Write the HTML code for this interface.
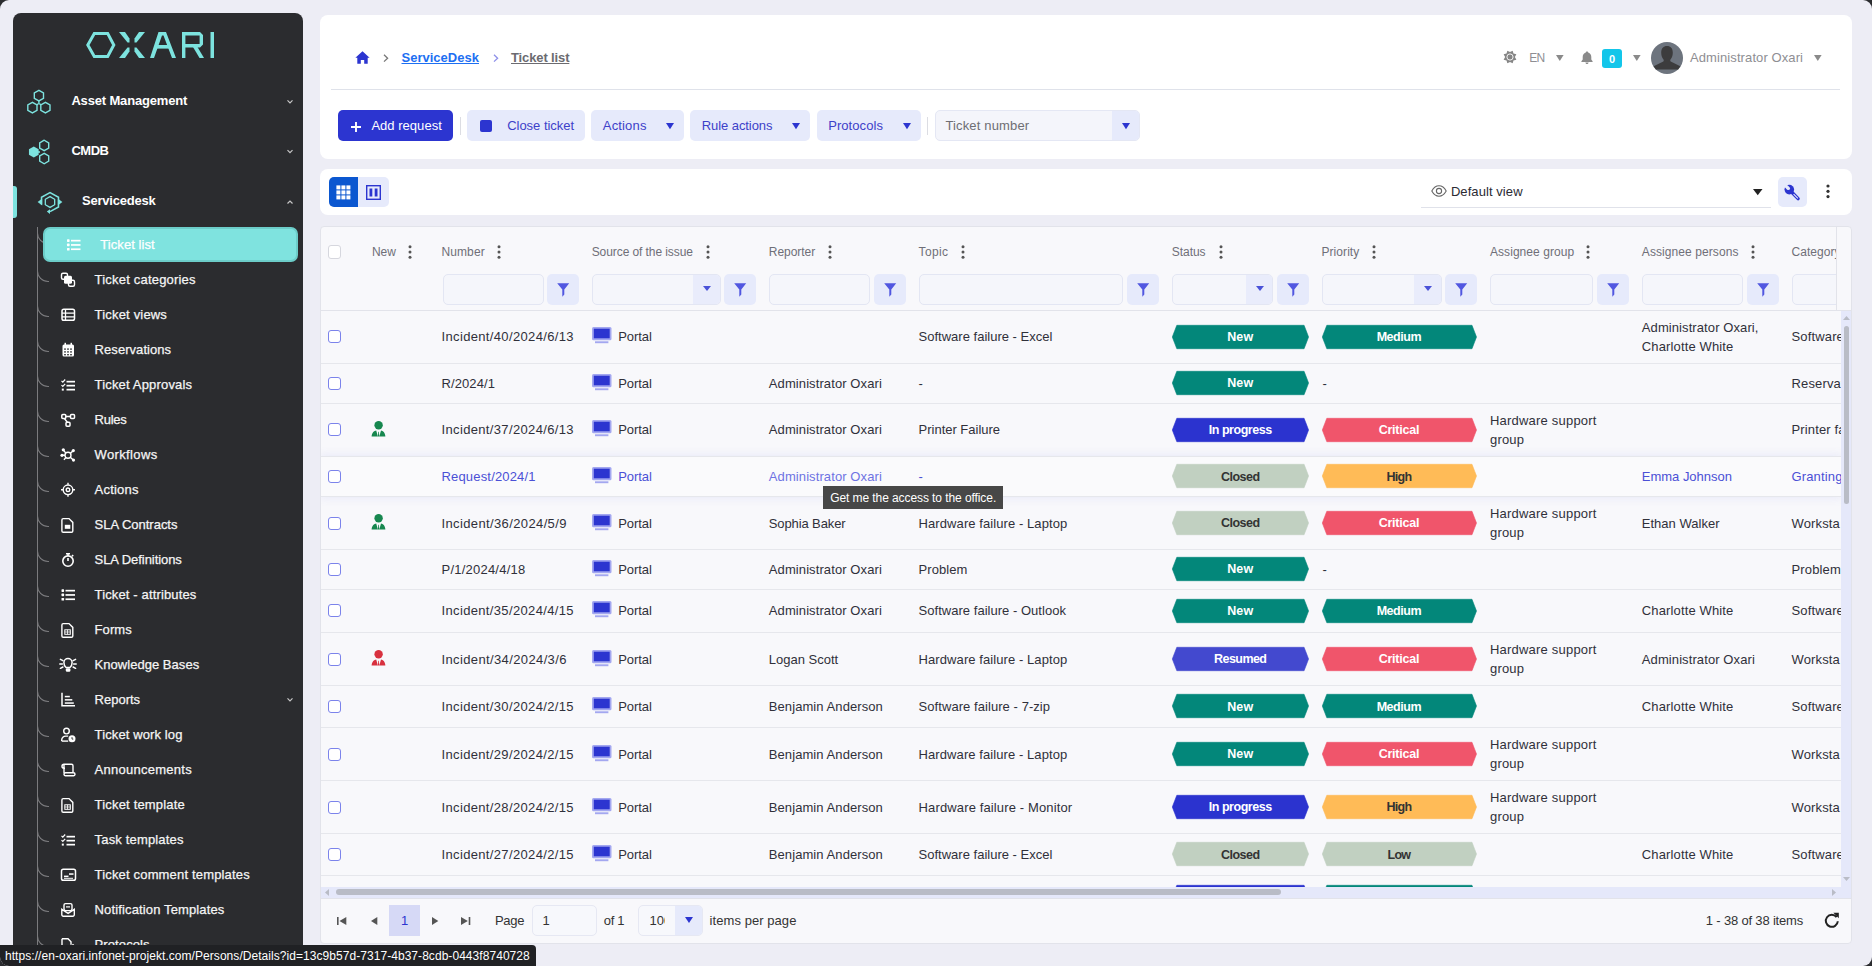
<!DOCTYPE html><html><head><meta charset="utf-8"><title>Ticket list</title><style>
*{box-sizing:border-box;margin:0;padding:0}
html,body{width:1872px;height:966px;overflow:hidden;background:#2b2c2f}
body{font-family:"Liberation Sans",sans-serif;position:relative}
.win{position:absolute;left:0;top:0;width:1872px;height:966px;background:#ededf5;border-radius:9px;overflow:hidden}
.t{position:absolute;white-space:nowrap}
.b{position:absolute}
svg.b{overflow:visible}
</style></head><body><div class="win">
<div class="b" style="left:13px;top:13px;width:290px;height:990px;background:#2b2c2f;border-radius:8px"></div>
<svg class="b" style="left:0px;top:0px" width="240" height="70" viewBox="0 0 240 70">
<polygon points="87.8,45 94.3,33.5 107.7,33.5 113.8,45 107.7,56.5 94.3,56.5" fill="none" stroke="#7de3df" stroke-width="3"/>
<g fill="#7de3df">
<polygon points="119,32 125,32 129.5,38.5 129.5,42.5 127.5,42.5"/>
<polygon points="119,58 125,58 129.5,51.5 129.5,47.5 127.5,47.5"/>
<polygon points="145,32 139,32 134.5,38.5 134.5,42.5 136.5,42.5"/>
<polygon points="145,58 139,58 134.5,51.5 134.5,47.5 136.5,47.5"/>
<polygon points="158.5,32 166,32 176,58 172,58 163.5,35.5 162,35.5 154,58 150,58"/>
<rect x="155" y="45" width="15" height="3.6"/>
<rect x="182" y="32" width="3.4" height="26"/>
<path d="M182,32 L200,32 L203,35 L203,44.5 L200,47.4 L182,47.4 L182,44 L199.6,44 L199.6,35.4 L182,35.4 Z"/>
<polygon points="193,47 197.5,47 204,58 199.5,58"/>
<rect x="210.5" y="32" width="3.5" height="26"/>
</g></svg>
<svg class="b" style="left:0px;top:0px" width="70" height="220" viewBox="0 0 70 220"><g fill="none" stroke="#7de3df" stroke-width="1.4">
<polygon points="38.90,90.30 34.31,92.95 34.31,98.25 38.90,100.90 43.49,98.25 43.49,92.95"/>
<polygon points="32.40,102.30 27.81,104.95 27.81,110.25 32.40,112.90 36.99,110.25 36.99,104.95"/>
<polygon points="45.40,102.30 40.81,104.95 40.81,110.25 45.40,112.90 49.99,110.25 49.99,104.95"/>
<polygon points="44.20,140.20 39.70,142.80 39.70,148.00 44.20,150.60 48.70,148.00 48.70,142.80"/>
<polygon points="44.20,153.40 39.70,156.00 39.70,161.20 44.20,163.80 48.70,161.20 48.70,156.00"/>
<path d="M38.9,100.9 V103.5 M36.5,104.8 L38.9,103.5 L41.3,104.8"/>
</g>
<polygon points="33.80,146.40 28.95,149.20 28.95,154.80 33.80,157.60 38.65,154.80 38.65,149.20" fill="#7de3df"/>
<line x1="38" y1="152" x2="40" y2="152" stroke="#7de3df" stroke-width="1.4"/>
<g fill="none" stroke="#7de3df" stroke-width="1.5">
<polygon points="50.00,196.60 45.32,199.30 45.32,204.70 50.00,207.40 54.68,204.70 54.68,199.30" stroke-width="1.3"/>
<path d="M41.5,204.5 L41.5,197.3 L50,192.6 L58.5,197.3 L58.5,207 L50,211.6"/>
</g>
<g fill="#7de3df"><polygon points="37.6,202 42.2,198.6 42.2,205.4"/><polygon points="62.4,202 57.8,198.6 57.8,205.4"/><polygon points="46.8,211.6 50,209.3 50,214"/></g>
</svg>
<div class="b" style="left:13px;top:186px;width:4px;height:32px;background:#7de3df;border-radius:0 3px 3px 0"></div>
<div class="t" style="left:71.4px;top:91.10px;font-size:13px;line-height:20px;color:#ffffff;font-weight:bold;letter-spacing:-0.167px;">Asset Management</div>
<div class="t" style="left:71.4px;top:140.90px;font-size:13px;line-height:20px;color:#ffffff;font-weight:bold;letter-spacing:-0.467px;">CMDB</div>
<div class="t" style="left:82px;top:190.90px;font-size:13px;line-height:20px;color:#ffffff;font-weight:bold;letter-spacing:-0.208px;">Servicedesk</div>
<svg class="b" style="left:0px;top:0px" width="300" height="220" viewBox="0 0 300 220"><path d="M287.5,100.3 L290,102.8 L292.5,100.3" fill="none" stroke="#c8c8c8" stroke-width="1.2"/></svg>
<svg class="b" style="left:0px;top:0px" width="300" height="220" viewBox="0 0 300 220"><path d="M287.5,150.10000000000002 L290,152.60000000000002 L292.5,150.10000000000002" fill="none" stroke="#c8c8c8" stroke-width="1.2"/></svg>
<svg class="b" style="left:0px;top:0px" width="300" height="220" viewBox="0 0 300 220"><path d="M287.5,203.5 L290,201 L292.5,203.5" fill="none" stroke="#c8c8c8" stroke-width="1.2"/></svg>
<div class="b" style="left:37px;top:227px;width:1px;height:740px;background:#7b7b7e"></div>
<div class="b" style="left:43px;top:227px;width:255px;height:35px;background:#7fe3df;border:2.5px solid #6ccdc9;border-radius:7px;z-index:1"></div>
<div class="b" style="left:37px;top:233.3px;width:12px;height:11px;border-left:1px solid #7b7b7e;border-bottom:1px solid #7b7b7e;border-bottom-left-radius:11px"></div>
<div class="b" style="left:0;top:0;z-index:2">
<svg class="b" style="left:0px;top:0px" width="80" height="966" viewBox="0 0 80 966"><rect x="67.0" y="239.3" width="2.6" height="2.6" rx="0.6" fill="#ffffff"/><rect x="71.0" y="239.8" width="9.5" height="1.7" fill="#ffffff"/><rect x="67.0" y="243.60000000000002" width="2.6" height="2.6" rx="0.6" fill="#ffffff"/><rect x="71.0" y="244.10000000000002" width="9.5" height="1.7" fill="#ffffff"/><rect x="67.0" y="247.9" width="2.6" height="2.6" rx="0.6" fill="#ffffff"/><rect x="71.0" y="248.4" width="9.5" height="1.7" fill="#ffffff"/></svg>
<div class="t" style="left:100.3px;top:235.00px;font-size:13px;line-height:20px;color:#ffffff;letter-spacing:0.065px;-webkit-text-stroke:0.25px #ffffff;">Ticket list</div>
</div>
<div class="b" style="left:37px;top:271.3px;width:12px;height:11px;border-left:1px solid #7b7b7e;border-bottom:1px solid #7b7b7e;border-bottom-left-radius:11px"></div>
<svg class="b" style="left:0px;top:0px" width="80" height="966" viewBox="0 0 80 966"><rect x="61.5" y="273.3" width="6" height="6" rx="1.5" fill="none" stroke="#ffffff" stroke-width="1.4"/><rect x="68.5" y="280.3" width="6" height="6" rx="1.5" fill="none" stroke="#ffffff" stroke-width="1.4"/><rect x="64" y="275.8" width="8" height="8" rx="1.5" fill="#ffffff"/></svg>
<div class="t" style="left:94.6px;top:270.00px;font-size:13px;line-height:20px;color:#f5f5f5;letter-spacing:0.197px;-webkit-text-stroke:0.25px #f5f5f5;">Ticket categories</div>
<div class="b" style="left:37px;top:306.3px;width:12px;height:11px;border-left:1px solid #7b7b7e;border-bottom:1px solid #7b7b7e;border-bottom-left-radius:11px"></div>
<svg class="b" style="left:0px;top:0px" width="80" height="966" viewBox="0 0 80 966"><rect x="62" y="309.3" width="12.5" height="11" rx="1.8" fill="none" stroke="#ffffff" stroke-width="1.5"/><path d="M62,313.1 h12.5 M62,316.8 h12.5 M65.5,309.3 v11" stroke="#ffffff" stroke-width="1.3"/></svg>
<div class="t" style="left:94.6px;top:305.00px;font-size:13px;line-height:20px;color:#f5f5f5;letter-spacing:0.177px;-webkit-text-stroke:0.25px #f5f5f5;">Ticket views</div>
<div class="b" style="left:37px;top:341.3px;width:12px;height:11px;border-left:1px solid #7b7b7e;border-bottom:1px solid #7b7b7e;border-bottom-left-radius:11px"></div>
<svg class="b" style="left:0px;top:0px" width="80" height="966" viewBox="0 0 80 966"><rect x="62.5" y="344.6" width="11.5" height="12" rx="1.5" fill="#ffffff"/><rect x="64.5" y="342.8" width="1.5" height="3" fill="#ffffff"/><rect x="70.5" y="342.8" width="1.5" height="3" fill="#ffffff"/><rect x="64.2" y="348.40000000000003" width="1.6" height="1.4" fill="#2b2c2f"/><rect x="64.2" y="351.20000000000005" width="1.6" height="1.4" fill="#2b2c2f"/><rect x="64.2" y="354.00000000000006" width="1.6" height="1.4" fill="#2b2c2f"/><rect x="67.2" y="348.40000000000003" width="1.6" height="1.4" fill="#2b2c2f"/><rect x="67.2" y="351.20000000000005" width="1.6" height="1.4" fill="#2b2c2f"/><rect x="67.2" y="354.00000000000006" width="1.6" height="1.4" fill="#2b2c2f"/><rect x="70.2" y="348.40000000000003" width="1.6" height="1.4" fill="#2b2c2f"/><rect x="70.2" y="351.20000000000005" width="1.6" height="1.4" fill="#2b2c2f"/><rect x="70.2" y="354.00000000000006" width="1.6" height="1.4" fill="#2b2c2f"/></svg>
<div class="t" style="left:94.6px;top:340.00px;font-size:13px;line-height:20px;color:#f5f5f5;letter-spacing:0.057px;-webkit-text-stroke:0.25px #f5f5f5;">Reservations</div>
<div class="b" style="left:37px;top:376.3px;width:12px;height:11px;border-left:1px solid #7b7b7e;border-bottom:1px solid #7b7b7e;border-bottom-left-radius:11px"></div>
<svg class="b" style="left:0px;top:0px" width="80" height="966" viewBox="0 0 80 966"><path d="M61.5,380.8 l1.3,1.3 l2.4,-2.6 M61.5,385.1 l1.3,1.3 l2.4,-2.6" fill="none" stroke="#ffffff" stroke-width="1.2"/><rect x="61.8" y="388.6" width="2" height="2" fill="#ffffff"/><rect x="66.5" y="380.8" width="8.5" height="1.7" fill="#ffffff"/><rect x="66.5" y="384.8" width="8.5" height="1.7" fill="#ffffff"/><rect x="66.5" y="388.8" width="8.5" height="1.7" fill="#ffffff"/></svg>
<div class="t" style="left:94.6px;top:375.00px;font-size:13px;line-height:20px;color:#f5f5f5;letter-spacing:0.168px;-webkit-text-stroke:0.25px #f5f5f5;">Ticket Approvals</div>
<div class="b" style="left:37px;top:411.3px;width:12px;height:11px;border-left:1px solid #7b7b7e;border-bottom:1px solid #7b7b7e;border-bottom-left-radius:11px"></div>
<svg class="b" style="left:0px;top:0px" width="80" height="966" viewBox="0 0 80 966"><g fill="none" stroke="#ffffff" stroke-width="1.5"><rect x="61.8" y="414.6" width="4" height="4" rx="1"/><rect x="70.5" y="414.6" width="4" height="4" rx="1"/><rect x="66" y="422.3" width="4" height="4" rx="1"/><path d="M65.8,416.6 h4.7 M64.5,418.6 l2.8,3.7"/></g></svg>
<div class="t" style="left:94.6px;top:410.00px;font-size:13px;line-height:20px;color:#f5f5f5;letter-spacing:-0.262px;-webkit-text-stroke:0.25px #f5f5f5;">Rules</div>
<div class="b" style="left:37px;top:446.3px;width:12px;height:11px;border-left:1px solid #7b7b7e;border-bottom:1px solid #7b7b7e;border-bottom-left-radius:11px"></div>
<svg class="b" style="left:0px;top:0px" width="80" height="966" viewBox="0 0 80 966"><g fill="none" stroke="#ffffff" stroke-width="1.4"><circle cx="68" cy="455.3" r="3"/><path d="M62,455.3 h3 M65.8,453.1 l-2.3,-3 M70.3,453.3 l2.5,-2.2 M70.3,457.3 l2.7,2.5 M65.9,457.6 l-2,2.2"/></g><g fill="#ffffff"><circle cx="62" cy="455.3" r="1.6"/><circle cx="63.3" cy="449.8" r="1.6"/><circle cx="73.3" cy="450.6" r="1.6"/><circle cx="73.5" cy="460.1" r="1.6"/></g></svg>
<div class="t" style="left:94.6px;top:445.00px;font-size:13px;line-height:20px;color:#f5f5f5;letter-spacing:0.356px;-webkit-text-stroke:0.25px #f5f5f5;">Workflows</div>
<div class="b" style="left:37px;top:481.3px;width:12px;height:11px;border-left:1px solid #7b7b7e;border-bottom:1px solid #7b7b7e;border-bottom-left-radius:11px"></div>
<svg class="b" style="left:0px;top:0px" width="80" height="966" viewBox="0 0 80 966"><g fill="none" stroke="#ffffff" stroke-width="1.4"><circle cx="68" cy="489.8" r="4.8"/><circle cx="68" cy="489.8" r="1.8"/><path d="M68,482.8 v2 M68,494.8 v2 M61,489.8 h2 M73,489.8 h2"/></g></svg>
<div class="t" style="left:94.6px;top:480.00px;font-size:13px;line-height:20px;color:#f5f5f5;letter-spacing:0.196px;-webkit-text-stroke:0.25px #f5f5f5;">Actions</div>
<div class="b" style="left:37px;top:516.3px;width:12px;height:11px;border-left:1px solid #7b7b7e;border-bottom:1px solid #7b7b7e;border-bottom-left-radius:11px"></div>
<svg class="b" style="left:0px;top:0px" width="80" height="966" viewBox="0 0 80 966"><path d="M63.2,518.5999999999999 h5.8 l3.8,3.8 v8.5 a1.3,1.3 0 0 1 -1.3,1.3 h-8.3 a1.3,1.3 0 0 1 -1.3,-1.3 v-11 a1.3,1.3 0 0 1 1.3,-1.3 z" fill="none" stroke="#ffffff" stroke-width="1.4"/><rect x="64.8" y="524.8" width="5.5" height="4" fill="#ffffff"/></svg>
<div class="t" style="left:94.6px;top:515.00px;font-size:13px;line-height:20px;color:#f5f5f5;letter-spacing:-0.019px;-webkit-text-stroke:0.25px #f5f5f5;">SLA Contracts</div>
<div class="b" style="left:37px;top:551.3px;width:12px;height:11px;border-left:1px solid #7b7b7e;border-bottom:1px solid #7b7b7e;border-bottom-left-radius:11px"></div>
<svg class="b" style="left:0px;top:0px" width="80" height="966" viewBox="0 0 80 966"><g fill="none" stroke="#ffffff" stroke-width="1.6"><circle cx="68" cy="561.0999999999999" r="5.2"/><path d="M68,561.0999999999999 v-3 M66,553.8 h4 M68,553.8 v2 M72,556.3 l1.2,-1.2"/></g></svg>
<div class="t" style="left:94.6px;top:550.00px;font-size:13px;line-height:20px;color:#f5f5f5;letter-spacing:-0.066px;-webkit-text-stroke:0.25px #f5f5f5;">SLA Definitions</div>
<div class="b" style="left:37px;top:586.3px;width:12px;height:11px;border-left:1px solid #7b7b7e;border-bottom:1px solid #7b7b7e;border-bottom-left-radius:11px"></div>
<svg class="b" style="left:0px;top:0px" width="80" height="966" viewBox="0 0 80 966"><rect x="61.5" y="589.3" width="2.6" height="2.6" rx="0.6" fill="#ffffff"/><rect x="65.5" y="589.8" width="9.5" height="1.7" fill="#ffffff"/><rect x="61.5" y="593.5999999999999" width="2.6" height="2.6" rx="0.6" fill="#ffffff"/><rect x="65.5" y="594.0999999999999" width="9.5" height="1.7" fill="#ffffff"/><rect x="61.5" y="597.9" width="2.6" height="2.6" rx="0.6" fill="#ffffff"/><rect x="65.5" y="598.4" width="9.5" height="1.7" fill="#ffffff"/></svg>
<div class="t" style="left:94.6px;top:585.00px;font-size:13px;line-height:20px;color:#f5f5f5;letter-spacing:0.136px;-webkit-text-stroke:0.25px #f5f5f5;">Ticket - attributes</div>
<div class="b" style="left:37px;top:621.3px;width:12px;height:11px;border-left:1px solid #7b7b7e;border-bottom:1px solid #7b7b7e;border-bottom-left-radius:11px"></div>
<svg class="b" style="left:0px;top:0px" width="80" height="966" viewBox="0 0 80 966"><path d="M63.2,623.5999999999999 h5.8 l3.8,3.8 v8.5 a1.3,1.3 0 0 1 -1.3,1.3 h-8.3 a1.3,1.3 0 0 1 -1.3,-1.3 v-11 a1.3,1.3 0 0 1 1.3,-1.3 z" fill="none" stroke="#ffffff" stroke-width="1.4"/><rect x="64.8" y="629.8" width="5.5" height="4.5" fill="none" stroke="#ffffff" stroke-width="1"/><path d="M64.8,632.0 h5.5 M67.5,629.8 v4.5" stroke="#ffffff" stroke-width="0.8"/></svg>
<div class="t" style="left:94.6px;top:620.00px;font-size:13px;line-height:20px;color:#f5f5f5;letter-spacing:0.056px;-webkit-text-stroke:0.25px #f5f5f5;">Forms</div>
<div class="b" style="left:37px;top:656.3px;width:12px;height:11px;border-left:1px solid #7b7b7e;border-bottom:1px solid #7b7b7e;border-bottom-left-radius:11px"></div>
<svg class="b" style="left:0px;top:0px" width="80" height="966" viewBox="0 0 80 966"><line x1="59.80" y1="664.00" x2="62.40" y2="664.00" stroke="#ffffff" stroke-width="1.5" stroke-linecap="round"/><line x1="73.60" y1="664.00" x2="76.20" y2="664.00" stroke="#ffffff" stroke-width="1.5" stroke-linecap="round"/><line x1="60.40" y1="659.30" x2="62.90" y2="660.60" stroke="#ffffff" stroke-width="1.5" stroke-linecap="round"/><line x1="75.60" y1="659.30" x2="73.10" y2="660.60" stroke="#ffffff" stroke-width="1.5" stroke-linecap="round"/><line x1="60.40" y1="668.30" x2="62.90" y2="667.00" stroke="#ffffff" stroke-width="1.5" stroke-linecap="round"/><line x1="75.60" y1="668.30" x2="73.10" y2="667.00" stroke="#ffffff" stroke-width="1.5" stroke-linecap="round"/><path d="M66.00,667.50 C64.50,666.30 63.90,665.00 63.90,662.60 A4.1,4.1 0 0 1 72.10,662.60 C72.10,665.00 71.50,666.30 70.00,667.50 Z" fill="none" stroke="#ffffff" stroke-width="1.5"/><rect x="65.80" y="668.20" width="4.6" height="3.6" rx="1.2" fill="#ffffff"/></svg>
<div class="t" style="left:94.6px;top:655.00px;font-size:13px;line-height:20px;color:#f5f5f5;letter-spacing:0.034px;-webkit-text-stroke:0.25px #f5f5f5;">Knowledge Bases</div>
<div class="b" style="left:37px;top:691.3px;width:12px;height:11px;border-left:1px solid #7b7b7e;border-bottom:1px solid #7b7b7e;border-bottom-left-radius:11px"></div>
<svg class="b" style="left:0px;top:0px" width="80" height="966" viewBox="0 0 80 966"><g fill="none" stroke="#ffffff" stroke-width="1.5"><path d="M62,692.8 v13 h13"/></g><g fill="#ffffff"><rect x="64.8" y="695.8" width="5" height="1.5"/><rect x="64.8" y="699.0999999999999" width="7.5" height="1.5"/><rect x="64.8" y="702.3" width="9" height="1.5"/></g></svg>
<div class="t" style="left:94.6px;top:690.00px;font-size:13px;line-height:20px;color:#f5f5f5;letter-spacing:0.0px;-webkit-text-stroke:0.25px #f5f5f5;">Reports</div>
<div class="b" style="left:37px;top:726.3px;width:12px;height:11px;border-left:1px solid #7b7b7e;border-bottom:1px solid #7b7b7e;border-bottom-left-radius:11px"></div>
<svg class="b" style="left:0px;top:0px" width="80" height="966" viewBox="0 0 80 966"><g fill="none" stroke="#ffffff" stroke-width="1.4"><circle cx="66.5" cy="731.0999999999999" r="2.8"/><path d="M61.7,741.0999999999999 v-1 a4,4 0 0 1 4,-4 h2.5"/><path d="M61.7,741.0999999999999 h6.5"/></g><circle cx="72" cy="738.8" r="3.5" fill="#ffffff"/><path d="M72,737.0999999999999 v2 h1.3" stroke="#2b2c2f" stroke-width="0.9" fill="none"/></svg>
<div class="t" style="left:94.6px;top:725.00px;font-size:13px;line-height:20px;color:#f5f5f5;letter-spacing:0.111px;-webkit-text-stroke:0.25px #f5f5f5;">Ticket work log</div>
<div class="b" style="left:37px;top:761.3px;width:12px;height:11px;border-left:1px solid #7b7b7e;border-bottom:1px solid #7b7b7e;border-bottom-left-radius:11px"></div>
<svg class="b" style="left:0px;top:0px" width="80" height="966" viewBox="0 0 80 966"><g fill="none" stroke="#ffffff" stroke-width="1.4"><path d="M64,764.3 h7.5 a1.5,1.5 0 0 1 1.5,1.5 v7.5 M64,764.3 a2,2 0 0 0 -2,2 a2,2 0 0 0 2,2 h1 M64,764.3 v9 M65.5,775.8 h8 a1.5,1.5 0 0 0 0,-3 h-8 a1.5,1.5 0 0 0 0,3 z"/></g></svg>
<div class="t" style="left:94.6px;top:760.00px;font-size:13px;line-height:20px;color:#f5f5f5;letter-spacing:0.258px;-webkit-text-stroke:0.25px #f5f5f5;">Announcements</div>
<div class="b" style="left:37px;top:796.3px;width:12px;height:11px;border-left:1px solid #7b7b7e;border-bottom:1px solid #7b7b7e;border-bottom-left-radius:11px"></div>
<svg class="b" style="left:0px;top:0px" width="80" height="966" viewBox="0 0 80 966"><path d="M63.2,798.5999999999999 h5.8 l3.8,3.8 v8.5 a1.3,1.3 0 0 1 -1.3,1.3 h-8.3 a1.3,1.3 0 0 1 -1.3,-1.3 v-11 a1.3,1.3 0 0 1 1.3,-1.3 z" fill="none" stroke="#ffffff" stroke-width="1.4"/><rect x="64.8" y="804.8" width="5.5" height="4.5" fill="none" stroke="#ffffff" stroke-width="1"/><path d="M64.8,807.0 h5.5 M67.5,804.8 v4.5" stroke="#ffffff" stroke-width="0.8"/></svg>
<div class="t" style="left:94.6px;top:795.00px;font-size:13px;line-height:20px;color:#f5f5f5;letter-spacing:0.177px;-webkit-text-stroke:0.25px #f5f5f5;">Ticket template</div>
<div class="b" style="left:37px;top:831.3px;width:12px;height:11px;border-left:1px solid #7b7b7e;border-bottom:1px solid #7b7b7e;border-bottom-left-radius:11px"></div>
<svg class="b" style="left:0px;top:0px" width="80" height="966" viewBox="0 0 80 966"><path d="M61.5,835.8 l1.3,1.3 l2.4,-2.6 M61.5,840.0999999999999 l1.3,1.3 l2.4,-2.6" fill="none" stroke="#ffffff" stroke-width="1.2"/><rect x="61.8" y="843.5999999999999" width="2" height="2" fill="#ffffff"/><rect x="66.5" y="835.8" width="8.5" height="1.7" fill="#ffffff"/><rect x="66.5" y="839.8" width="8.5" height="1.7" fill="#ffffff"/><rect x="66.5" y="843.8" width="8.5" height="1.7" fill="#ffffff"/></svg>
<div class="t" style="left:94.6px;top:830.00px;font-size:13px;line-height:20px;color:#f5f5f5;letter-spacing:0.165px;-webkit-text-stroke:0.25px #f5f5f5;">Task templates</div>
<div class="b" style="left:37px;top:866.3px;width:12px;height:11px;border-left:1px solid #7b7b7e;border-bottom:1px solid #7b7b7e;border-bottom-left-radius:11px"></div>
<svg class="b" style="left:0px;top:0px" width="80" height="966" viewBox="0 0 80 966"><rect x="61.5" y="869.3" width="14" height="11" rx="1.8" fill="none" stroke="#ffffff" stroke-width="1.5"/><rect x="64" y="875.5999999999999" width="4.5" height="1.5" fill="#ffffff"/><rect x="69" y="873.3" width="4.5" height="1.5" fill="#ffffff"/><rect x="64" y="877.8" width="9" height="1" fill="#ffffff"/></svg>
<div class="t" style="left:94.6px;top:865.00px;font-size:13px;line-height:20px;color:#f5f5f5;letter-spacing:0.167px;-webkit-text-stroke:0.25px #f5f5f5;">Ticket comment templates</div>
<div class="b" style="left:37px;top:901.3px;width:12px;height:11px;border-left:1px solid #7b7b7e;border-bottom:1px solid #7b7b7e;border-bottom-left-radius:11px"></div>
<svg class="b" style="left:0px;top:0px" width="80" height="966" viewBox="0 0 80 966"><g fill="none" stroke="#ffffff" stroke-width="1.4"><rect x="64" y="903.5999999999999" width="8" height="7" rx="1.5"/><path d="M61.8,909.3 v5.5 a1.5,1.5 0 0 0 1.5,1.5 h9.5 a1.5,1.5 0 0 0 1.5,-1.5 v-5.5 l-6.2,4 z"/></g><rect x="66" y="906.3" width="4" height="1.2" fill="#ffffff"/></svg>
<div class="t" style="left:94.6px;top:900.00px;font-size:13px;line-height:20px;color:#f5f5f5;letter-spacing:0.133px;-webkit-text-stroke:0.25px #f5f5f5;">Notification Templates</div>
<div class="b" style="left:37px;top:936.3px;width:12px;height:11px;border-left:1px solid #7b7b7e;border-bottom:1px solid #7b7b7e;border-bottom-left-radius:11px"></div>
<svg class="b" style="left:0px;top:0px" width="80" height="966" viewBox="0 0 80 966"><g fill="none" stroke="#ffffff" stroke-width="1.4"><path d="M62,938.8 h6 l3,3 v3 M62,938.8 v12 h7"/></g><path d="M69,947.8 l4,-4 l2,2 l-4,4 z" fill="#ffffff"/></svg>
<div class="t" style="left:94.6px;top:935.00px;font-size:13px;line-height:20px;color:#f5f5f5;letter-spacing:0.094px;-webkit-text-stroke:0.25px #f5f5f5;">Protocols</div>
<svg class="b" style="left:0px;top:0px" width="300" height="966" viewBox="0 0 300 966"><path d="M287.5,698.3 L290,700.8 L292.5,698.3" fill="none" stroke="#c8c8c8" stroke-width="1.2"/></svg>
<div class="b" style="left:320px;top:15px;width:1532px;height:143.5px;background:#fff;border-radius:8px"></div>
<div class="b" style="left:331px;top:89px;width:1509px;height:1px;background:#dfe2ea"></div>
<svg class="b" style="left:355px;top:51px" width="15" height="13" viewBox="0 0 15 13"><path d="M7.5,0.3 L14.6,6.8 L12.7,6.8 L12.7,12.8 L9.2,12.8 L9.2,9 L5.8,9 L5.8,12.8 L2.3,12.8 L2.3,6.8 L0.4,6.8 Z" fill="#2c35d0"/></svg>
<svg class="b" style="left:383px;top:54px" width="6" height="9" viewBox="0 0 6 9"><path d="M1,0.8 L4.6,4.2 L1,7.6" fill="none" stroke="#777" stroke-width="1.3"/></svg>
<div class="t" style="left:401.5px;top:47.50px;font-size:13px;line-height:20px;color:#1d6ff2;font-weight:bold;letter-spacing:0.013px;"><span style="text-decoration:underline">ServiceDesk</span></div>
<svg class="b" style="left:492.5px;top:54px" width="6" height="9" viewBox="0 0 6 9"><path d="M1,0.8 L4.6,4.2 L1,7.6" fill="none" stroke="#8d8fe9" stroke-width="1.3"/></svg>
<div class="t" style="left:511px;top:47.50px;font-size:13px;line-height:20px;color:#6b6b70;font-weight:bold;letter-spacing:-0.125px;"><span style="text-decoration:underline">Ticket list</span></div>
<svg class="b" style="left:1502.5px;top:50.1px" width="14" height="14" viewBox="0 0 14 14"><polygon points="11.90,7.00 13.37,4.36 10.46,3.54 9.64,0.63 7.00,2.10 4.36,0.63 3.54,3.54 0.63,4.36 2.10,7.00 0.63,9.64 3.54,10.46 4.36,13.37 7.00,11.90 9.64,13.37 10.46,10.46 13.37,9.64" fill="#858585"/><circle cx="7" cy="7" r="3.1" fill="none" stroke="#fff" stroke-width="0.9"/></svg>
<div class="t" style="left:1529.3px;top:48.13px;font-size:12px;line-height:20px;color:#8e8e93;letter-spacing:-0.925px;">EN</div>
<svg class="b" style="left:1556.3px;top:55px" width="7.6" height="6" viewBox="0 0 7.6 6"><polygon points="0,0 7.6,0 3.8,6" fill="#8a8a8a"/></svg>
<svg class="b" style="left:1581px;top:51px" width="12" height="13" viewBox="0 0 12 13"><path d="M6,0.5 C6.8,0.5 7.2,1 7.2,1.6 C9.3,2.2 10.3,4 10.3,6 L10.3,8.6 L11.6,10.2 L11.6,10.9 L0.4,10.9 L0.4,10.2 L1.7,8.6 L1.7,6 C1.7,4 2.7,2.2 4.8,1.6 C4.8,1 5.2,0.5 6,0.5 Z M4.4,11.5 L7.6,11.5 C7.6,12.4 6.9,13 6,13 C5.1,13 4.4,12.4 4.4,11.5Z" fill="#8a8a8a"/></svg>
<div class="b" style="left:1602px;top:49px;width:20px;height:18.5px;background:#13c6ea;border-radius:3px"></div>
<div class="t" style="left:1602px;top:48.66px;font-size:11px;line-height:20px;color:#fff;font-weight:bold;"><div style="width:20px;text-align:center">0</div></div>
<svg class="b" style="left:1633px;top:55px" width="7.6" height="6" viewBox="0 0 7.6 6"><polygon points="0,0 7.6,0 3.8,6" fill="#8a8a8a"/></svg>
<svg class="b" style="left:1651px;top:42px" width="32" height="32" viewBox="0 0 32 32"><circle cx="16" cy="16" r="16" fill="#6d747e"/><g fill="#3c3c3d"><path d="M10.2,10.8 C10.2,6 12.5,3.9 16,3.9 C19.5,3.9 21.8,6 21.8,10.8 C21.8,14 20.6,16.4 19.2,18 L19.6,20 L12.4,20 L12.8,18 C11.4,16.4 10.2,14 10.2,10.8 Z"/><path d="M12.3,19.6 L19.7,19.6 L29.3,24.3 L27.2,27.4 L4.8,27.4 L2.7,24.3 Z"/></g></svg>
<div class="t" style="left:1690px;top:47.80px;font-size:13px;line-height:20px;color:#8e8e93;letter-spacing:0.097px;">Administrator Oxari</div>
<svg class="b" style="left:1814.3px;top:55px" width="7.6" height="6" viewBox="0 0 7.6 6"><polygon points="0,0 7.6,0 3.8,6" fill="#8a8a8a"/></svg>
<div class="b" style="left:338px;top:110px;width:115px;height:31px;background:#2c35d0;border-radius:5px"></div>
<svg class="b" style="left:351px;top:121.5px" width="10" height="10" viewBox="0 0 10 10"><path d="M5,0 V10 M0,5 H10" stroke="#fff" stroke-width="1.9"/></svg>
<div class="t" style="left:371.4px;top:115.90px;font-size:13px;line-height:20px;color:#ffffff;letter-spacing:0.028px;">Add request</div>
<div class="b" style="left:459.5px;top:117px;width:1px;height:18px;background:#dcdde3"></div>
<div class="b" style="left:467px;top:110px;width:118px;height:31px;background:#e6eafb;border-radius:5px"></div>
<div class="b" style="left:480px;top:120.3px;width:11.7px;height:11.5px;background:#2c35d0;border-radius:2px"></div>
<div class="t" style="left:507.2px;top:115.90px;font-size:13px;line-height:20px;color:#3d41c9;letter-spacing:-0.023px;">Close ticket</div>
<div class="b" style="left:591px;top:110px;width:92.5px;height:31px;background:#e6eafb;border-radius:5px"></div>
<div class="t" style="left:602.8px;top:115.90px;font-size:13px;line-height:20px;color:#3d41c9;letter-spacing:0.163px;">Actions</div>
<svg class="b" style="left:666px;top:122.8px" width="8" height="6.2" viewBox="0 0 8 6.2"><polygon points="0,0 8,0 4.0,6.2" fill="#2c35d0"/></svg>
<div class="b" style="left:690.2px;top:110px;width:119.79999999999995px;height:31px;background:#e6eafb;border-radius:5px"></div>
<div class="t" style="left:701.8px;top:115.90px;font-size:13px;line-height:20px;color:#3d41c9;letter-spacing:-0.082px;">Rule actions</div>
<svg class="b" style="left:792.2px;top:122.8px" width="8" height="6.2" viewBox="0 0 8 6.2"><polygon points="0,0 8,0 4.0,6.2" fill="#2c35d0"/></svg>
<div class="b" style="left:817px;top:110px;width:104px;height:31px;background:#e6eafb;border-radius:5px"></div>
<div class="t" style="left:828.2px;top:115.90px;font-size:13px;line-height:20px;color:#3d41c9;letter-spacing:0.069px;">Protocols</div>
<svg class="b" style="left:903.4px;top:122.8px" width="8" height="6.2" viewBox="0 0 8 6.2"><polygon points="0,0 8,0 4.0,6.2" fill="#2c35d0"/></svg>
<div class="b" style="left:927px;top:117px;width:1px;height:18px;background:#dcdde3"></div>
<div class="b" style="left:935.4px;top:110px;width:204.3px;height:31px;background:#f4f5fb;border:1px solid #e4e7f4;border-radius:5px"></div>
<div class="b" style="left:1112.3px;top:111px;width:26.4px;height:29px;background:#e6eafb;border-radius:0 4px 4px 0"></div>
<div class="t" style="left:945.4px;top:115.90px;font-size:13px;line-height:20px;color:#6e6e74;letter-spacing:0.152px;">Ticket number</div>
<svg class="b" style="left:1121.8px;top:122.5px" width="8" height="6.2" viewBox="0 0 8 6.2"><polygon points="0,0 8,0 4.0,6.2" fill="#2c35d0"/></svg>
<div class="b" style="left:320px;top:169px;width:1532px;height:45.5px;background:#fff;border-radius:8px"></div>
<div class="b" style="left:329px;top:177px;width:59.5px;height:30px;background:#e6eafb;border-radius:5px"></div>
<div class="b" style="left:329px;top:177px;width:29px;height:30px;background:#0b57d0;border-radius:5px 0 0 5px"></div>
<svg class="b" style="left:336px;top:184.5px" width="15" height="15" viewBox="0 0 15 15"><rect x="0.4" y="0.4" width="4" height="4" fill="#fff"/><rect x="0.4" y="5.4" width="4" height="4" fill="#fff"/><rect x="0.4" y="10.4" width="4" height="4" fill="#fff"/><rect x="5.4" y="0.4" width="4" height="4" fill="#fff"/><rect x="5.4" y="5.4" width="4" height="4" fill="#fff"/><rect x="5.4" y="10.4" width="4" height="4" fill="#fff"/><rect x="10.4" y="0.4" width="4" height="4" fill="#fff"/><rect x="10.4" y="5.4" width="4" height="4" fill="#fff"/><rect x="10.4" y="10.4" width="4" height="4" fill="#fff"/></svg>
<svg class="b" style="left:366px;top:184.5px" width="15" height="15" viewBox="0 0 15 15"><rect x="0.7" y="0.7" width="13.6" height="13.6" fill="none" stroke="#2c35d0" stroke-width="1.4"/><rect x="3.5" y="3.5" width="2.8" height="8" fill="#2c35d0"/><rect x="8.7" y="3.5" width="2.8" height="8" fill="#2c35d0"/></svg>
<svg class="b" style="left:1430.5px;top:185px" width="16" height="12" viewBox="0 0 16 12"><path d="M0.8,6 C3,2 5.5,0.8 8,0.8 C10.5,0.8 13,2 15.2,6 C13,10 10.5,11.2 8,11.2 C5.5,11.2 3,10 0.8,6 Z" fill="none" stroke="#666" stroke-width="1.1"/><circle cx="8" cy="6" r="2.6" fill="none" stroke="#666" stroke-width="1.1"/></svg>
<div class="t" style="left:1450.9px;top:181.50px;font-size:13px;line-height:20px;color:#2b2b33;letter-spacing:0.075px;">Default view</div>
<svg class="b" style="left:1753px;top:188.6px" width="9.5" height="6.2" viewBox="0 0 9.5 6.2"><polygon points="0,0 9.5,0 4.75,6.2" fill="#222"/></svg>
<div class="b" style="left:1420.6px;top:207px;width:350px;height:1px;background:#e0e2ea"></div>
<div class="b" style="left:1777.8px;top:177px;width:29px;height:29.5px;background:#e6eafb;border-radius:5px"></div>
<svg class="b" style="left:1780px;top:180px" width="20" height="22" viewBox="0 0 20 22"><line x1="12.3" y1="12.8" x2="18.1" y2="18.6" stroke="#2c35d0" stroke-width="3.4" stroke-linecap="round"/><line x1="13.6" y1="14.1" x2="17.9" y2="18.4" stroke="#e6eafb" stroke-width="1.1"/><circle cx="9.3" cy="9.6" r="4.8" fill="#2c35d0"/><circle cx="8.3" cy="8.4" r="1.7" fill="#e6eafb"/><line x1="8.3" y1="8.4" x2="5" y2="5.1" stroke="#e6eafb" stroke-width="3.4"/></svg>
<svg class="b" style="left:1826px;top:184px" width="4" height="15" viewBox="0 0 4 15"><circle cx="2" cy="2" r="1.6" fill="#333"/><circle cx="2" cy="7.3" r="1.6" fill="#333"/><circle cx="2" cy="12.6" r="1.6" fill="#333"/></svg>
<div class="b" style="left:320px;top:225.5px;width:1532px;height:718px;background:#f8f8fb;border:1px solid #e2e3ea;border-radius:4px"></div>
<div class="b" style="left:321px;top:310px;width:1530px;height:1px;background:#e2e3ea"></div>
<div class="b" style="left:1836px;top:226.5px;width:1px;height:84px;background:#e2e3ea"></div>
<div class="b" style="left:328px;top:244.6px;width:13px;height:14px;background:#fff;border:1px solid #d6d7de;border-radius:3px"></div>
<div class="t" style="left:371.9px;top:242.03px;font-size:12px;line-height:20px;color:#6f6f78;letter-spacing:-0.012px;">New</div>
<svg class="b" style="left:408.4px;top:244.7px" width="4" height="14" viewBox="0 0 4 14"><circle cx="2" cy="1.8" r="1.5" fill="#555"/><circle cx="2" cy="7" r="1.5" fill="#555"/><circle cx="2" cy="12.2" r="1.5" fill="#555"/></svg>
<div class="t" style="left:441.5px;top:242.03px;font-size:12px;line-height:20px;color:#6f6f78;letter-spacing:0.095px;">Number</div>
<svg class="b" style="left:497.4px;top:244.7px" width="4" height="14" viewBox="0 0 4 14"><circle cx="2" cy="1.8" r="1.5" fill="#555"/><circle cx="2" cy="7" r="1.5" fill="#555"/><circle cx="2" cy="12.2" r="1.5" fill="#555"/></svg>
<div class="t" style="left:591.7px;top:242.03px;font-size:12px;line-height:20px;color:#6f6f78;letter-spacing:-0.081px;">Source of the issue</div>
<svg class="b" style="left:706.2px;top:244.7px" width="4" height="14" viewBox="0 0 4 14"><circle cx="2" cy="1.8" r="1.5" fill="#555"/><circle cx="2" cy="7" r="1.5" fill="#555"/><circle cx="2" cy="12.2" r="1.5" fill="#555"/></svg>
<div class="t" style="left:768.8px;top:242.03px;font-size:12px;line-height:20px;color:#6f6f78;letter-spacing:-0.036px;">Reporter</div>
<svg class="b" style="left:828.2px;top:244.7px" width="4" height="14" viewBox="0 0 4 14"><circle cx="2" cy="1.8" r="1.5" fill="#555"/><circle cx="2" cy="7" r="1.5" fill="#555"/><circle cx="2" cy="12.2" r="1.5" fill="#555"/></svg>
<div class="t" style="left:918.6px;top:242.03px;font-size:12px;line-height:20px;color:#6f6f78;letter-spacing:0.375px;">Topic</div>
<svg class="b" style="left:960.5px;top:244.7px" width="4" height="14" viewBox="0 0 4 14"><circle cx="2" cy="1.8" r="1.5" fill="#555"/><circle cx="2" cy="7" r="1.5" fill="#555"/><circle cx="2" cy="12.2" r="1.5" fill="#555"/></svg>
<div class="t" style="left:1171.8px;top:242.03px;font-size:12px;line-height:20px;color:#6f6f78;letter-spacing:-0.06px;">Status</div>
<svg class="b" style="left:1218.5px;top:244.7px" width="4" height="14" viewBox="0 0 4 14"><circle cx="2" cy="1.8" r="1.5" fill="#555"/><circle cx="2" cy="7" r="1.5" fill="#555"/><circle cx="2" cy="12.2" r="1.5" fill="#555"/></svg>
<div class="t" style="left:1321.5px;top:242.03px;font-size:12px;line-height:20px;color:#6f6f78;letter-spacing:0.061px;">Priority</div>
<svg class="b" style="left:1372.4px;top:244.7px" width="4" height="14" viewBox="0 0 4 14"><circle cx="2" cy="1.8" r="1.5" fill="#555"/><circle cx="2" cy="7" r="1.5" fill="#555"/><circle cx="2" cy="12.2" r="1.5" fill="#555"/></svg>
<div class="t" style="left:1490px;top:242.03px;font-size:12px;line-height:20px;color:#6f6f78;letter-spacing:0.056px;">Assignee group</div>
<svg class="b" style="left:1586.1px;top:244.7px" width="4" height="14" viewBox="0 0 4 14"><circle cx="2" cy="1.8" r="1.5" fill="#555"/><circle cx="2" cy="7" r="1.5" fill="#555"/><circle cx="2" cy="12.2" r="1.5" fill="#555"/></svg>
<div class="t" style="left:1641.8px;top:242.03px;font-size:12px;line-height:20px;color:#6f6f78;letter-spacing:0.082px;">Assignee persons</div>
<svg class="b" style="left:1751.4px;top:244.7px" width="4" height="14" viewBox="0 0 4 14"><circle cx="2" cy="1.8" r="1.5" fill="#555"/><circle cx="2" cy="7" r="1.5" fill="#555"/><circle cx="2" cy="12.2" r="1.5" fill="#555"/></svg>
<div class="b" style="left:1791px;top:230px;width:45px;height:80px;overflow:hidden">
<div class="t" style="left:0.5px;top:12.03px;font-size:12px;line-height:20px;color:#6f6f78;letter-spacing:0.05px;">Category</div>
<div class="b" style="left:1px;top:44px;width:80px;height:30.5px;background:#f5f6fb;border:1px solid #e3e6f3;border-radius:5px"></div>
</div>
<div class="b" style="left:442.5px;top:274px;width:101.0px;height:30.5px;background:#f5f6fb;border:1px solid #e3e6f3;border-radius:5px"></div>
<div class="b" style="left:547px;top:274px;width:32px;height:30.5px;background:#e6eafb;border-radius:5px"></div>
<svg class="b" style="left:556.8px;top:282.7px" width="13" height="14" viewBox="0 0 13 14"><path d="M0.2,0.2 H12.2 L7.3,6.5 V11.5 L5.3,13.8 V6.5 Z" fill="#5157e0"/></svg>
<div class="b" style="left:592.4px;top:274px;width:128.20000000000005px;height:30.5px;background:#f5f6fb;border:1px solid #e3e6f3;border-radius:5px"></div>
<div class="b" style="left:693px;top:275px;width:26.600000000000023px;height:28.5px;background:#e9ecfb;border-radius:0 4px 4px 0"></div>
<svg class="b" style="left:702.8px;top:286px" width="8" height="5" viewBox="0 0 8 5"><polygon points="0,0 8,0 4,5" fill="#4a52d8"/></svg>
<div class="b" style="left:724px;top:274px;width:31.700000000000045px;height:30.5px;background:#e6eafb;border-radius:5px"></div>
<svg class="b" style="left:733.65px;top:282.7px" width="13" height="14" viewBox="0 0 13 14"><path d="M0.2,0.2 H12.2 L7.3,6.5 V11.5 L5.3,13.8 V6.5 Z" fill="#5157e0"/></svg>
<div class="b" style="left:769.2px;top:274px;width:101.29999999999995px;height:30.5px;background:#f5f6fb;border:1px solid #e3e6f3;border-radius:5px"></div>
<div class="b" style="left:874px;top:274px;width:32px;height:30.5px;background:#e6eafb;border-radius:5px"></div>
<svg class="b" style="left:883.8px;top:282.7px" width="13" height="14" viewBox="0 0 13 14"><path d="M0.2,0.2 H12.2 L7.3,6.5 V11.5 L5.3,13.8 V6.5 Z" fill="#5157e0"/></svg>
<div class="b" style="left:919.2px;top:274px;width:204.20000000000005px;height:30.5px;background:#f5f6fb;border:1px solid #e3e6f3;border-radius:5px"></div>
<div class="b" style="left:1127px;top:274px;width:32px;height:30.5px;background:#e6eafb;border-radius:5px"></div>
<svg class="b" style="left:1136.8px;top:282.7px" width="13" height="14" viewBox="0 0 13 14"><path d="M0.2,0.2 H12.2 L7.3,6.5 V11.5 L5.3,13.8 V6.5 Z" fill="#5157e0"/></svg>
<div class="b" style="left:1172.4px;top:274px;width:101.0px;height:30.5px;background:#f5f6fb;border:1px solid #e3e6f3;border-radius:5px"></div>
<div class="b" style="left:1246px;top:275px;width:26.40000000000009px;height:28.5px;background:#e9ecfb;border-radius:0 4px 4px 0"></div>
<svg class="b" style="left:1255.7px;top:286px" width="8" height="5" viewBox="0 0 8 5"><polygon points="0,0 8,0 4,5" fill="#4a52d8"/></svg>
<div class="b" style="left:1277.2px;top:274px;width:31.5px;height:30.5px;background:#e6eafb;border-radius:5px"></div>
<svg class="b" style="left:1286.75px;top:282.7px" width="13" height="14" viewBox="0 0 13 14"><path d="M0.2,0.2 H12.2 L7.3,6.5 V11.5 L5.3,13.8 V6.5 Z" fill="#5157e0"/></svg>
<div class="b" style="left:1322.4px;top:274px;width:119.29999999999995px;height:30.5px;background:#f5f6fb;border:1px solid #e3e6f3;border-radius:5px"></div>
<div class="b" style="left:1414.4px;top:275px;width:26.299999999999955px;height:28.5px;background:#e9ecfb;border-radius:0 4px 4px 0"></div>
<svg class="b" style="left:1424.0500000000002px;top:286px" width="8" height="5" viewBox="0 0 8 5"><polygon points="0,0 8,0 4,5" fill="#4a52d8"/></svg>
<div class="b" style="left:1445px;top:274px;width:32px;height:30.5px;background:#e6eafb;border-radius:5px"></div>
<svg class="b" style="left:1454.8px;top:282.7px" width="13" height="14" viewBox="0 0 13 14"><path d="M0.2,0.2 H12.2 L7.3,6.5 V11.5 L5.3,13.8 V6.5 Z" fill="#5157e0"/></svg>
<div class="b" style="left:1490.4px;top:274px;width:103.09999999999991px;height:30.5px;background:#f5f6fb;border:1px solid #e3e6f3;border-radius:5px"></div>
<div class="b" style="left:1597.1px;top:274px;width:31.800000000000182px;height:30.5px;background:#e6eafb;border-radius:5px"></div>
<svg class="b" style="left:1606.8px;top:282.7px" width="13" height="14" viewBox="0 0 13 14"><path d="M0.2,0.2 H12.2 L7.3,6.5 V11.5 L5.3,13.8 V6.5 Z" fill="#5157e0"/></svg>
<div class="b" style="left:1642.2px;top:274px;width:101.20000000000005px;height:30.5px;background:#f5f6fb;border:1px solid #e3e6f3;border-radius:5px"></div>
<div class="b" style="left:1747px;top:274px;width:31.59999999999991px;height:30.5px;background:#e6eafb;border-radius:5px"></div>
<svg class="b" style="left:1756.6px;top:282.7px" width="13" height="14" viewBox="0 0 13 14"><path d="M0.2,0.2 H12.2 L7.3,6.5 V11.5 L5.3,13.8 V6.5 Z" fill="#5157e0"/></svg>
<div class="b" style="left:321px;top:311px;width:1520px;height:576px;overflow:hidden">
<div class="b" style="left:0px;top:145px;width:1520px;height:40.5px;background:#fafafc;box-shadow:0 0 9px 1px rgba(90,100,230,0.10)"></div>
<div class="b" style="left:0px;top:51.5px;width:1520px;height:1px;background:#e6e7ec"></div>
<div class="b" style="left:7px;top:19.399999999999977px;width:13px;height:13px;background:#fff;border:1.3px solid #7b83eb;border-radius:3px"></div>
<div class="t" style="left:120.5px;top:16.40px;font-size:13px;line-height:20px;color:#30303a;letter-spacing:0.35px;">Incident/40/2024/6/13</div>
<svg class="b" style="left:270.70000000000005px;top:16.399999999999977px" width="20" height="17" viewBox="0 0 20 17"><rect x="0" y="0" width="19.5" height="13.2" rx="1.5" fill="#a3a7f0"/><rect x="1.8" y="1.7" width="15.9" height="9.6" fill="#2c35d0"/><rect x="3" y="14.3" width="13.4" height="1.9" fill="#a3a7f0"/></svg>
<div class="t" style="left:297.20000000000005px;top:16.40px;font-size:13px;line-height:20px;color:#30303a;letter-spacing:-0.04px;">Portal</div>
<div class="t" style="left:597.6px;top:16.40px;font-size:13px;line-height:20px;color:#30303a;letter-spacing:0.003px;">Software failure - Excel</div>
<svg class="b" style="left:850.8px;top:13.5px" width="136.9000000000001" height="24" viewBox="0 0 136.9000000000001 24"><polygon points="0.3,12 4.8,0.3 132.1,0.3 136.6,12 132.1,23.7 4.8,23.7" fill="#03877a" stroke="#03877a" stroke-width="0.6" stroke-linejoin="round"/></svg>
<div class="t" style="left:850.8px;top:15.77px;font-size:12.5px;line-height:20px;color:#fff;font-weight:bold;letter-spacing:0.125px;"><div style="width:136.9px;text-align:center">New</div></div>
<svg class="b" style="left:1000.5px;top:13.5px" width="154.79999999999995" height="24" viewBox="0 0 154.79999999999995 24"><polygon points="0.3,12 4.8,0.3 150.0,0.3 154.5,12 150.0,23.7 4.8,23.7" fill="#03877a" stroke="#03877a" stroke-width="0.6" stroke-linejoin="round"/></svg>
<div class="t" style="left:1000.5px;top:15.77px;font-size:12.5px;line-height:20px;color:#fff;font-weight:bold;letter-spacing:-0.45px;"><div style="width:154.8px;text-align:center">Medium</div></div>
<div class="t" style="left:1320.8px;top:6.90px;font-size:13px;line-height:20px;color:#30303a;letter-spacing:0.091px;">Administrator Oxari,</div>
<div class="t" style="left:1320.8px;top:25.90px;font-size:13px;line-height:20px;color:#30303a;letter-spacing:0.134px;">Charlotte White</div>
<div class="b" style="left:1470px;top:-1px;width:50px;height:53px;overflow:hidden">
<div class="t" style="left:0.5px;top:17.40px;font-size:13px;line-height:20px;color:#30303a;letter-spacing:0.15px;">Software</div>
</div>
<div class="b" style="left:0px;top:91.5px;width:1520px;height:1px;background:#e6e7ec"></div>
<div class="b" style="left:7px;top:65.89999999999998px;width:13px;height:13px;background:#fff;border:1.3px solid #7b83eb;border-radius:3px"></div>
<div class="t" style="left:120.5px;top:62.90px;font-size:13px;line-height:20px;color:#30303a;letter-spacing:0.093px;">R/2024/1</div>
<svg class="b" style="left:270.70000000000005px;top:62.89999999999998px" width="20" height="17" viewBox="0 0 20 17"><rect x="0" y="0" width="19.5" height="13.2" rx="1.5" fill="#a3a7f0"/><rect x="1.8" y="1.7" width="15.9" height="9.6" fill="#2c35d0"/><rect x="3" y="14.3" width="13.4" height="1.9" fill="#a3a7f0"/></svg>
<div class="t" style="left:297.20000000000005px;top:62.90px;font-size:13px;line-height:20px;color:#30303a;letter-spacing:-0.04px;">Portal</div>
<div class="t" style="left:447.79999999999995px;top:62.90px;font-size:13px;line-height:20px;color:#30303a;letter-spacing:0.097px;">Administrator Oxari</div>
<div class="t" style="left:597.6px;top:62.90px;font-size:13px;line-height:20px;color:#30303a;">-</div>
<svg class="b" style="left:850.8px;top:60.0px" width="136.9000000000001" height="24" viewBox="0 0 136.9000000000001 24"><polygon points="0.3,12 4.8,0.3 132.1,0.3 136.6,12 132.1,23.7 4.8,23.7" fill="#03877a" stroke="#03877a" stroke-width="0.6" stroke-linejoin="round"/></svg>
<div class="t" style="left:850.8px;top:62.27px;font-size:12.5px;line-height:20px;color:#fff;font-weight:bold;letter-spacing:0.125px;"><div style="width:136.9px;text-align:center">New</div></div>
<div class="t" style="left:1001.5px;top:62.90px;font-size:13px;line-height:20px;color:#30303a;">-</div>
<div class="b" style="left:1470px;top:52px;width:50px;height:40px;overflow:hidden">
<div class="t" style="left:0.5px;top:10.90px;font-size:13px;line-height:20px;color:#30303a;letter-spacing:0.15px;">Reservati</div>
</div>
<div class="b" style="left:0px;top:144.5px;width:1520px;height:1px;background:#e6e7ec"></div>
<div class="b" style="left:7px;top:112.39999999999998px;width:13px;height:13px;background:#fff;border:1.3px solid #7b83eb;border-radius:3px"></div>
<div class="t" style="left:120.5px;top:109.40px;font-size:13px;line-height:20px;color:#30303a;letter-spacing:0.35px;">Incident/37/2024/6/13</div>
<svg class="b" style="left:270.70000000000005px;top:109.39999999999998px" width="20" height="17" viewBox="0 0 20 17"><rect x="0" y="0" width="19.5" height="13.2" rx="1.5" fill="#a3a7f0"/><rect x="1.8" y="1.7" width="15.9" height="9.6" fill="#2c35d0"/><rect x="3" y="14.3" width="13.4" height="1.9" fill="#a3a7f0"/></svg>
<div class="t" style="left:297.20000000000005px;top:109.40px;font-size:13px;line-height:20px;color:#30303a;letter-spacing:-0.04px;">Portal</div>
<svg class="b" style="left:50px;top:109.5px" width="15" height="16" viewBox="0 0 15 16"><circle cx="7.6" cy="4.2" r="4.2" fill="#17874f"/><path d="M0.6,15.4 C0.8,11.5 3.3,9.6 5.2,9.4 L6.9,15.4 L7.3,10.8 L7.9,10.8 L8.3,15.4 L10,9.4 C11.9,9.6 14.2,11.5 14.4,15.4 Z" fill="#17874f"/></svg>
<div class="t" style="left:447.79999999999995px;top:109.40px;font-size:13px;line-height:20px;color:#30303a;letter-spacing:0.097px;">Administrator Oxari</div>
<div class="t" style="left:597.6px;top:109.40px;font-size:13px;line-height:20px;color:#30303a;letter-spacing:-0.016px;">Printer Failure</div>
<svg class="b" style="left:850.8px;top:106.5px" width="136.9000000000001" height="24" viewBox="0 0 136.9000000000001 24"><polygon points="0.3,12 4.8,0.3 132.1,0.3 136.6,12 132.1,23.7 4.8,23.7" fill="#2b33cf" stroke="#2b33cf" stroke-width="0.6" stroke-linejoin="round"/></svg>
<div class="t" style="left:850.8px;top:108.77px;font-size:12.5px;line-height:20px;color:#fff;font-weight:bold;letter-spacing:-0.463px;"><div style="width:136.9px;text-align:center">In progress</div></div>
<svg class="b" style="left:1000.5px;top:106.5px" width="154.79999999999995" height="24" viewBox="0 0 154.79999999999995 24"><polygon points="0.3,12 4.8,0.3 150.0,0.3 154.5,12 150.0,23.7 4.8,23.7" fill="#f0556b" stroke="#f0556b" stroke-width="0.6" stroke-linejoin="round"/></svg>
<div class="t" style="left:1000.5px;top:108.77px;font-size:12.5px;line-height:20px;color:#fff;font-weight:bold;letter-spacing:-0.239px;"><div style="width:154.8px;text-align:center">Critical</div></div>
<div class="t" style="left:1169px;top:99.90px;font-size:13px;line-height:20px;color:#30303a;letter-spacing:0.208px;">Hardware support</div>
<div class="t" style="left:1169px;top:118.90px;font-size:13px;line-height:20px;color:#30303a;letter-spacing:0.162px;">group</div>
<div class="b" style="left:1470px;top:92px;width:50px;height:53px;overflow:hidden">
<div class="t" style="left:0.5px;top:17.40px;font-size:13px;line-height:20px;color:#30303a;letter-spacing:0.15px;">Printer fa</div>
</div>
<div class="b" style="left:0px;top:185.0px;width:1520px;height:1px;background:#e6e7ec"></div>
<div class="b" style="left:7px;top:159.14999999999998px;width:13px;height:13px;background:#fff;border:1.3px solid #7b83eb;border-radius:3px"></div>
<div class="t" style="left:120.5px;top:156.15px;font-size:13px;line-height:20px;color:#4b50d6;letter-spacing:0.173px;">Request/2024/1</div>
<svg class="b" style="left:270.70000000000005px;top:156.14999999999998px" width="20" height="17" viewBox="0 0 20 17"><rect x="0" y="0" width="19.5" height="13.2" rx="1.5" fill="#a3a7f0"/><rect x="1.8" y="1.7" width="15.9" height="9.6" fill="#2c35d0"/><rect x="3" y="14.3" width="13.4" height="1.9" fill="#a3a7f0"/></svg>
<div class="t" style="left:297.20000000000005px;top:156.15px;font-size:13px;line-height:20px;color:#4b50d6;letter-spacing:-0.04px;">Portal</div>
<div class="t" style="left:447.79999999999995px;top:156.15px;font-size:13px;line-height:20px;color:#6e73e3;letter-spacing:0.097px;">Administrator Oxari</div>
<div class="t" style="left:597.6px;top:156.15px;font-size:13px;line-height:20px;color:#4b50d6;">-</div>
<svg class="b" style="left:850.8px;top:153.25px" width="136.9000000000001" height="24" viewBox="0 0 136.9000000000001 24"><polygon points="0.3,12 4.8,0.3 132.1,0.3 136.6,12 132.1,23.7 4.8,23.7" fill="#c1d0c1" stroke="#c1d0c1" stroke-width="0.6" stroke-linejoin="round"/></svg>
<div class="t" style="left:850.8px;top:155.52px;font-size:12.5px;line-height:20px;color:#333;font-weight:bold;letter-spacing:-0.505px;"><div style="width:136.9px;text-align:center">Closed</div></div>
<svg class="b" style="left:1000.5px;top:153.25px" width="154.79999999999995" height="24" viewBox="0 0 154.79999999999995 24"><polygon points="0.3,12 4.8,0.3 150.0,0.3 154.5,12 150.0,23.7 4.8,23.7" fill="#ffbb57" stroke="#ffbb57" stroke-width="0.6" stroke-linejoin="round"/></svg>
<div class="t" style="left:1000.5px;top:155.52px;font-size:12.5px;line-height:20px;color:#333;font-weight:bold;letter-spacing:-0.717px;"><div style="width:154.8px;text-align:center">High</div></div>
<div class="t" style="left:1320.8px;top:156.15px;font-size:13px;line-height:20px;color:#4b50d6;letter-spacing:-0.016px;">Emma Johnson</div>
<div class="b" style="left:1470px;top:145px;width:50px;height:40.5px;overflow:hidden">
<div class="t" style="left:0.5px;top:11.15px;font-size:13px;line-height:20px;color:#4b50d6;letter-spacing:0.15px;">Granting</div>
</div>
<div class="b" style="left:0px;top:237.5px;width:1520px;height:1px;background:#e6e7ec"></div>
<div class="b" style="left:7px;top:205.64999999999998px;width:13px;height:13px;background:#fff;border:1.3px solid #7b83eb;border-radius:3px"></div>
<div class="t" style="left:120.5px;top:202.65px;font-size:13px;line-height:20px;color:#30303a;letter-spacing:0.375px;">Incident/36/2024/5/9</div>
<svg class="b" style="left:270.70000000000005px;top:202.6500000000001px" width="20" height="17" viewBox="0 0 20 17"><rect x="0" y="0" width="19.5" height="13.2" rx="1.5" fill="#a3a7f0"/><rect x="1.8" y="1.7" width="15.9" height="9.6" fill="#2c35d0"/><rect x="3" y="14.3" width="13.4" height="1.9" fill="#a3a7f0"/></svg>
<div class="t" style="left:297.20000000000005px;top:202.65px;font-size:13px;line-height:20px;color:#30303a;letter-spacing:-0.04px;">Portal</div>
<svg class="b" style="left:50px;top:202.75px" width="15" height="16" viewBox="0 0 15 16"><circle cx="7.6" cy="4.2" r="4.2" fill="#17874f"/><path d="M0.6,15.4 C0.8,11.5 3.3,9.6 5.2,9.4 L6.9,15.4 L7.3,10.8 L7.9,10.8 L8.3,15.4 L10,9.4 C11.9,9.6 14.2,11.5 14.4,15.4 Z" fill="#17874f"/></svg>
<div class="t" style="left:447.79999999999995px;top:202.65px;font-size:13px;line-height:20px;color:#30303a;letter-spacing:-0.109px;">Sophia Baker</div>
<div class="t" style="left:597.6px;top:202.65px;font-size:13px;line-height:20px;color:#30303a;letter-spacing:0.081px;">Hardware failure - Laptop</div>
<svg class="b" style="left:850.8px;top:199.75px" width="136.9000000000001" height="24" viewBox="0 0 136.9000000000001 24"><polygon points="0.3,12 4.8,0.3 132.1,0.3 136.6,12 132.1,23.7 4.8,23.7" fill="#c1d0c1" stroke="#c1d0c1" stroke-width="0.6" stroke-linejoin="round"/></svg>
<div class="t" style="left:850.8px;top:202.02px;font-size:12.5px;line-height:20px;color:#333;font-weight:bold;letter-spacing:-0.505px;"><div style="width:136.9px;text-align:center">Closed</div></div>
<svg class="b" style="left:1000.5px;top:199.75px" width="154.79999999999995" height="24" viewBox="0 0 154.79999999999995 24"><polygon points="0.3,12 4.8,0.3 150.0,0.3 154.5,12 150.0,23.7 4.8,23.7" fill="#f0556b" stroke="#f0556b" stroke-width="0.6" stroke-linejoin="round"/></svg>
<div class="t" style="left:1000.5px;top:202.02px;font-size:12.5px;line-height:20px;color:#fff;font-weight:bold;letter-spacing:-0.239px;"><div style="width:154.8px;text-align:center">Critical</div></div>
<div class="t" style="left:1169px;top:193.15px;font-size:13px;line-height:20px;color:#30303a;letter-spacing:0.208px;">Hardware support</div>
<div class="t" style="left:1169px;top:212.15px;font-size:13px;line-height:20px;color:#30303a;letter-spacing:0.162px;">group</div>
<div class="t" style="left:1320.8px;top:202.65px;font-size:13px;line-height:20px;color:#30303a;letter-spacing:0.018px;">Ethan Walker</div>
<div class="b" style="left:1470px;top:185.5px;width:50px;height:52.5px;overflow:hidden">
<div class="t" style="left:0.5px;top:17.15px;font-size:13px;line-height:20px;color:#30303a;letter-spacing:0.15px;">Worksta</div>
</div>
<div class="b" style="left:0px;top:277.5px;width:1520px;height:1px;background:#e6e7ec"></div>
<div class="b" style="left:7px;top:251.89999999999998px;width:13px;height:13px;background:#fff;border:1.3px solid #7b83eb;border-radius:3px"></div>
<div class="t" style="left:120.5px;top:248.90px;font-size:13px;line-height:20px;color:#30303a;letter-spacing:0.225px;">P/1/2024/4/18</div>
<svg class="b" style="left:270.70000000000005px;top:248.9000000000001px" width="20" height="17" viewBox="0 0 20 17"><rect x="0" y="0" width="19.5" height="13.2" rx="1.5" fill="#a3a7f0"/><rect x="1.8" y="1.7" width="15.9" height="9.6" fill="#2c35d0"/><rect x="3" y="14.3" width="13.4" height="1.9" fill="#a3a7f0"/></svg>
<div class="t" style="left:297.20000000000005px;top:248.90px;font-size:13px;line-height:20px;color:#30303a;letter-spacing:-0.04px;">Portal</div>
<div class="t" style="left:447.79999999999995px;top:248.90px;font-size:13px;line-height:20px;color:#30303a;letter-spacing:0.097px;">Administrator Oxari</div>
<div class="t" style="left:597.6px;top:248.90px;font-size:13px;line-height:20px;color:#30303a;letter-spacing:0.054px;">Problem</div>
<svg class="b" style="left:850.8px;top:246.0px" width="136.9000000000001" height="24" viewBox="0 0 136.9000000000001 24"><polygon points="0.3,12 4.8,0.3 132.1,0.3 136.6,12 132.1,23.7 4.8,23.7" fill="#03877a" stroke="#03877a" stroke-width="0.6" stroke-linejoin="round"/></svg>
<div class="t" style="left:850.8px;top:248.27px;font-size:12.5px;line-height:20px;color:#fff;font-weight:bold;letter-spacing:0.125px;"><div style="width:136.9px;text-align:center">New</div></div>
<div class="t" style="left:1001.5px;top:248.90px;font-size:13px;line-height:20px;color:#30303a;">-</div>
<div class="b" style="left:1470px;top:238px;width:50px;height:40px;overflow:hidden">
<div class="t" style="left:0.5px;top:10.90px;font-size:13px;line-height:20px;color:#30303a;letter-spacing:0.15px;">Problem</div>
</div>
<div class="b" style="left:0px;top:320.5px;width:1520px;height:1px;background:#e6e7ec"></div>
<div class="b" style="left:7px;top:293.4px;width:13px;height:13px;background:#fff;border:1.3px solid #7b83eb;border-radius:3px"></div>
<div class="t" style="left:120.5px;top:290.40px;font-size:13px;line-height:20px;color:#30303a;letter-spacing:0.35px;">Incident/35/2024/4/15</div>
<svg class="b" style="left:270.70000000000005px;top:290.4000000000001px" width="20" height="17" viewBox="0 0 20 17"><rect x="0" y="0" width="19.5" height="13.2" rx="1.5" fill="#a3a7f0"/><rect x="1.8" y="1.7" width="15.9" height="9.6" fill="#2c35d0"/><rect x="3" y="14.3" width="13.4" height="1.9" fill="#a3a7f0"/></svg>
<div class="t" style="left:297.20000000000005px;top:290.40px;font-size:13px;line-height:20px;color:#30303a;letter-spacing:-0.04px;">Portal</div>
<div class="t" style="left:447.79999999999995px;top:290.40px;font-size:13px;line-height:20px;color:#30303a;letter-spacing:0.097px;">Administrator Oxari</div>
<div class="t" style="left:597.6px;top:290.40px;font-size:13px;line-height:20px;color:#30303a;letter-spacing:0.026px;">Software failure - Outlook</div>
<svg class="b" style="left:850.8px;top:287.5px" width="136.9000000000001" height="24" viewBox="0 0 136.9000000000001 24"><polygon points="0.3,12 4.8,0.3 132.1,0.3 136.6,12 132.1,23.7 4.8,23.7" fill="#03877a" stroke="#03877a" stroke-width="0.6" stroke-linejoin="round"/></svg>
<div class="t" style="left:850.8px;top:289.77px;font-size:12.5px;line-height:20px;color:#fff;font-weight:bold;letter-spacing:0.125px;"><div style="width:136.9px;text-align:center">New</div></div>
<svg class="b" style="left:1000.5px;top:287.5px" width="154.79999999999995" height="24" viewBox="0 0 154.79999999999995 24"><polygon points="0.3,12 4.8,0.3 150.0,0.3 154.5,12 150.0,23.7 4.8,23.7" fill="#03877a" stroke="#03877a" stroke-width="0.6" stroke-linejoin="round"/></svg>
<div class="t" style="left:1000.5px;top:289.77px;font-size:12.5px;line-height:20px;color:#fff;font-weight:bold;letter-spacing:-0.45px;"><div style="width:154.8px;text-align:center">Medium</div></div>
<div class="t" style="left:1320.8px;top:290.40px;font-size:13px;line-height:20px;color:#30303a;letter-spacing:0.134px;">Charlotte White</div>
<div class="b" style="left:1470px;top:278px;width:50px;height:43px;overflow:hidden">
<div class="t" style="left:0.5px;top:12.40px;font-size:13px;line-height:20px;color:#30303a;letter-spacing:0.15px;">Software</div>
</div>
<div class="b" style="left:0px;top:374.0px;width:1520px;height:1px;background:#e6e7ec"></div>
<div class="b" style="left:7px;top:341.65px;width:13px;height:13px;background:#fff;border:1.3px solid #7b83eb;border-radius:3px"></div>
<div class="t" style="left:120.5px;top:338.65px;font-size:13px;line-height:20px;color:#30303a;letter-spacing:0.375px;">Incident/34/2024/3/6</div>
<svg class="b" style="left:270.70000000000005px;top:338.6500000000001px" width="20" height="17" viewBox="0 0 20 17"><rect x="0" y="0" width="19.5" height="13.2" rx="1.5" fill="#a3a7f0"/><rect x="1.8" y="1.7" width="15.9" height="9.6" fill="#2c35d0"/><rect x="3" y="14.3" width="13.4" height="1.9" fill="#a3a7f0"/></svg>
<div class="t" style="left:297.20000000000005px;top:338.65px;font-size:13px;line-height:20px;color:#30303a;letter-spacing:-0.04px;">Portal</div>
<svg class="b" style="left:50px;top:338.75px" width="15" height="16" viewBox="0 0 15 16"><circle cx="7.6" cy="4.2" r="4.2" fill="#d8313f"/><path d="M0.6,15.4 C0.8,11.5 3.3,9.6 5.2,9.4 L6.9,15.4 L7.3,10.8 L7.9,10.8 L8.3,15.4 L10,9.4 C11.9,9.6 14.2,11.5 14.4,15.4 Z" fill="#d8313f"/></svg>
<div class="t" style="left:447.79999999999995px;top:338.65px;font-size:13px;line-height:20px;color:#30303a;letter-spacing:-0.008px;">Logan Scott</div>
<div class="t" style="left:597.6px;top:338.65px;font-size:13px;line-height:20px;color:#30303a;letter-spacing:0.081px;">Hardware failure - Laptop</div>
<svg class="b" style="left:850.8px;top:335.75px" width="136.9000000000001" height="24" viewBox="0 0 136.9000000000001 24"><polygon points="0.3,12 4.8,0.3 132.1,0.3 136.6,12 132.1,23.7 4.8,23.7" fill="#4349cf" stroke="#4349cf" stroke-width="0.6" stroke-linejoin="round"/></svg>
<div class="t" style="left:850.8px;top:338.02px;font-size:12.5px;line-height:20px;color:#fff;font-weight:bold;letter-spacing:-0.558px;"><div style="width:136.9px;text-align:center">Resumed</div></div>
<svg class="b" style="left:1000.5px;top:335.75px" width="154.79999999999995" height="24" viewBox="0 0 154.79999999999995 24"><polygon points="0.3,12 4.8,0.3 150.0,0.3 154.5,12 150.0,23.7 4.8,23.7" fill="#f0556b" stroke="#f0556b" stroke-width="0.6" stroke-linejoin="round"/></svg>
<div class="t" style="left:1000.5px;top:338.02px;font-size:12.5px;line-height:20px;color:#fff;font-weight:bold;letter-spacing:-0.239px;"><div style="width:154.8px;text-align:center">Critical</div></div>
<div class="t" style="left:1169px;top:329.15px;font-size:13px;line-height:20px;color:#30303a;letter-spacing:0.208px;">Hardware support</div>
<div class="t" style="left:1169px;top:348.15px;font-size:13px;line-height:20px;color:#30303a;letter-spacing:0.162px;">group</div>
<div class="t" style="left:1320.8px;top:338.65px;font-size:13px;line-height:20px;color:#30303a;letter-spacing:0.097px;">Administrator Oxari</div>
<div class="b" style="left:1470px;top:321px;width:50px;height:53.5px;overflow:hidden">
<div class="t" style="left:0.5px;top:17.65px;font-size:13px;line-height:20px;color:#30303a;letter-spacing:0.15px;">Worksta</div>
</div>
<div class="b" style="left:0px;top:415.5px;width:1520px;height:1px;background:#e6e7ec"></div>
<div class="b" style="left:7px;top:389.15px;width:13px;height:13px;background:#fff;border:1.3px solid #7b83eb;border-radius:3px"></div>
<div class="t" style="left:120.5px;top:386.15px;font-size:13px;line-height:20px;color:#30303a;letter-spacing:0.35px;">Incident/30/2024/2/15</div>
<svg class="b" style="left:270.70000000000005px;top:386.1500000000001px" width="20" height="17" viewBox="0 0 20 17"><rect x="0" y="0" width="19.5" height="13.2" rx="1.5" fill="#a3a7f0"/><rect x="1.8" y="1.7" width="15.9" height="9.6" fill="#2c35d0"/><rect x="3" y="14.3" width="13.4" height="1.9" fill="#a3a7f0"/></svg>
<div class="t" style="left:297.20000000000005px;top:386.15px;font-size:13px;line-height:20px;color:#30303a;letter-spacing:-0.04px;">Portal</div>
<div class="t" style="left:447.79999999999995px;top:386.15px;font-size:13px;line-height:20px;color:#30303a;letter-spacing:0.078px;">Benjamin Anderson</div>
<div class="t" style="left:597.6px;top:386.15px;font-size:13px;line-height:20px;color:#30303a;letter-spacing:0.061px;">Software failure - 7-zip</div>
<svg class="b" style="left:850.8px;top:383.25px" width="136.9000000000001" height="24" viewBox="0 0 136.9000000000001 24"><polygon points="0.3,12 4.8,0.3 132.1,0.3 136.6,12 132.1,23.7 4.8,23.7" fill="#03877a" stroke="#03877a" stroke-width="0.6" stroke-linejoin="round"/></svg>
<div class="t" style="left:850.8px;top:385.52px;font-size:12.5px;line-height:20px;color:#fff;font-weight:bold;letter-spacing:0.125px;"><div style="width:136.9px;text-align:center">New</div></div>
<svg class="b" style="left:1000.5px;top:383.25px" width="154.79999999999995" height="24" viewBox="0 0 154.79999999999995 24"><polygon points="0.3,12 4.8,0.3 150.0,0.3 154.5,12 150.0,23.7 4.8,23.7" fill="#03877a" stroke="#03877a" stroke-width="0.6" stroke-linejoin="round"/></svg>
<div class="t" style="left:1000.5px;top:385.52px;font-size:12.5px;line-height:20px;color:#fff;font-weight:bold;letter-spacing:-0.45px;"><div style="width:154.8px;text-align:center">Medium</div></div>
<div class="t" style="left:1320.8px;top:386.15px;font-size:13px;line-height:20px;color:#30303a;letter-spacing:0.134px;">Charlotte White</div>
<div class="b" style="left:1470px;top:374.5px;width:50px;height:41.5px;overflow:hidden">
<div class="t" style="left:0.5px;top:11.65px;font-size:13px;line-height:20px;color:#30303a;letter-spacing:0.15px;">Software</div>
</div>
<div class="b" style="left:0px;top:468.70000000000005px;width:1520px;height:1px;background:#e6e7ec"></div>
<div class="b" style="left:7px;top:436.5px;width:13px;height:13px;background:#fff;border:1.3px solid #7b83eb;border-radius:3px"></div>
<div class="t" style="left:120.5px;top:433.50px;font-size:13px;line-height:20px;color:#30303a;letter-spacing:0.35px;">Incident/29/2024/2/15</div>
<svg class="b" style="left:270.70000000000005px;top:433.5000000000001px" width="20" height="17" viewBox="0 0 20 17"><rect x="0" y="0" width="19.5" height="13.2" rx="1.5" fill="#a3a7f0"/><rect x="1.8" y="1.7" width="15.9" height="9.6" fill="#2c35d0"/><rect x="3" y="14.3" width="13.4" height="1.9" fill="#a3a7f0"/></svg>
<div class="t" style="left:297.20000000000005px;top:433.50px;font-size:13px;line-height:20px;color:#30303a;letter-spacing:-0.04px;">Portal</div>
<div class="t" style="left:447.79999999999995px;top:433.50px;font-size:13px;line-height:20px;color:#30303a;letter-spacing:0.078px;">Benjamin Anderson</div>
<div class="t" style="left:597.6px;top:433.50px;font-size:13px;line-height:20px;color:#30303a;letter-spacing:0.081px;">Hardware failure - Laptop</div>
<svg class="b" style="left:850.8px;top:430.6px" width="136.9000000000001" height="24" viewBox="0 0 136.9000000000001 24"><polygon points="0.3,12 4.8,0.3 132.1,0.3 136.6,12 132.1,23.7 4.8,23.7" fill="#03877a" stroke="#03877a" stroke-width="0.6" stroke-linejoin="round"/></svg>
<div class="t" style="left:850.8px;top:432.87px;font-size:12.5px;line-height:20px;color:#fff;font-weight:bold;letter-spacing:0.125px;"><div style="width:136.9px;text-align:center">New</div></div>
<svg class="b" style="left:1000.5px;top:430.6px" width="154.79999999999995" height="24" viewBox="0 0 154.79999999999995 24"><polygon points="0.3,12 4.8,0.3 150.0,0.3 154.5,12 150.0,23.7 4.8,23.7" fill="#f0556b" stroke="#f0556b" stroke-width="0.6" stroke-linejoin="round"/></svg>
<div class="t" style="left:1000.5px;top:432.87px;font-size:12.5px;line-height:20px;color:#fff;font-weight:bold;letter-spacing:-0.239px;"><div style="width:154.8px;text-align:center">Critical</div></div>
<div class="t" style="left:1169px;top:424.00px;font-size:13px;line-height:20px;color:#30303a;letter-spacing:0.208px;">Hardware support</div>
<div class="t" style="left:1169px;top:443.00px;font-size:13px;line-height:20px;color:#30303a;letter-spacing:0.162px;">group</div>
<div class="b" style="left:1470px;top:416px;width:50px;height:53.200000000000045px;overflow:hidden">
<div class="t" style="left:0.5px;top:17.50px;font-size:13px;line-height:20px;color:#30303a;letter-spacing:0.15px;">Worksta</div>
</div>
<div class="b" style="left:0px;top:521.9px;width:1520px;height:1px;background:#e6e7ec"></div>
<div class="b" style="left:7px;top:489.69999999999993px;width:13px;height:13px;background:#fff;border:1.3px solid #7b83eb;border-radius:3px"></div>
<div class="t" style="left:120.5px;top:486.70px;font-size:13px;line-height:20px;color:#30303a;letter-spacing:0.35px;">Incident/28/2024/2/15</div>
<svg class="b" style="left:270.70000000000005px;top:486.70000000000005px" width="20" height="17" viewBox="0 0 20 17"><rect x="0" y="0" width="19.5" height="13.2" rx="1.5" fill="#a3a7f0"/><rect x="1.8" y="1.7" width="15.9" height="9.6" fill="#2c35d0"/><rect x="3" y="14.3" width="13.4" height="1.9" fill="#a3a7f0"/></svg>
<div class="t" style="left:297.20000000000005px;top:486.70px;font-size:13px;line-height:20px;color:#30303a;letter-spacing:-0.04px;">Portal</div>
<div class="t" style="left:447.79999999999995px;top:486.70px;font-size:13px;line-height:20px;color:#30303a;letter-spacing:0.078px;">Benjamin Anderson</div>
<div class="t" style="left:597.6px;top:486.70px;font-size:13px;line-height:20px;color:#30303a;letter-spacing:0.13px;">Hardware failure - Monitor</div>
<svg class="b" style="left:850.8px;top:483.79999999999995px" width="136.9000000000001" height="24" viewBox="0 0 136.9000000000001 24"><polygon points="0.3,12 4.8,0.3 132.1,0.3 136.6,12 132.1,23.7 4.8,23.7" fill="#2b33cf" stroke="#2b33cf" stroke-width="0.6" stroke-linejoin="round"/></svg>
<div class="t" style="left:850.8px;top:486.07px;font-size:12.5px;line-height:20px;color:#fff;font-weight:bold;letter-spacing:-0.463px;"><div style="width:136.9px;text-align:center">In progress</div></div>
<svg class="b" style="left:1000.5px;top:483.79999999999995px" width="154.79999999999995" height="24" viewBox="0 0 154.79999999999995 24"><polygon points="0.3,12 4.8,0.3 150.0,0.3 154.5,12 150.0,23.7 4.8,23.7" fill="#ffbb57" stroke="#ffbb57" stroke-width="0.6" stroke-linejoin="round"/></svg>
<div class="t" style="left:1000.5px;top:486.07px;font-size:12.5px;line-height:20px;color:#333;font-weight:bold;letter-spacing:-0.717px;"><div style="width:154.8px;text-align:center">High</div></div>
<div class="t" style="left:1169px;top:477.20px;font-size:13px;line-height:20px;color:#30303a;letter-spacing:0.208px;">Hardware support</div>
<div class="t" style="left:1169px;top:496.20px;font-size:13px;line-height:20px;color:#30303a;letter-spacing:0.162px;">group</div>
<div class="b" style="left:1470px;top:469.20000000000005px;width:50px;height:53.19999999999993px;overflow:hidden">
<div class="t" style="left:0.5px;top:17.50px;font-size:13px;line-height:20px;color:#30303a;letter-spacing:0.15px;">Worksta</div>
</div>
<div class="b" style="left:0px;top:563.7px;width:1520px;height:1px;background:#e6e7ec"></div>
<div class="b" style="left:7px;top:537.1999999999999px;width:13px;height:13px;background:#fff;border:1.3px solid #7b83eb;border-radius:3px"></div>
<div class="t" style="left:120.5px;top:534.20px;font-size:13px;line-height:20px;color:#30303a;letter-spacing:0.35px;">Incident/27/2024/2/15</div>
<svg class="b" style="left:270.70000000000005px;top:534.2px" width="20" height="17" viewBox="0 0 20 17"><rect x="0" y="0" width="19.5" height="13.2" rx="1.5" fill="#a3a7f0"/><rect x="1.8" y="1.7" width="15.9" height="9.6" fill="#2c35d0"/><rect x="3" y="14.3" width="13.4" height="1.9" fill="#a3a7f0"/></svg>
<div class="t" style="left:297.20000000000005px;top:534.20px;font-size:13px;line-height:20px;color:#30303a;letter-spacing:-0.04px;">Portal</div>
<div class="t" style="left:447.79999999999995px;top:534.20px;font-size:13px;line-height:20px;color:#30303a;letter-spacing:0.078px;">Benjamin Anderson</div>
<div class="t" style="left:597.6px;top:534.20px;font-size:13px;line-height:20px;color:#30303a;letter-spacing:0.003px;">Software failure - Excel</div>
<svg class="b" style="left:850.8px;top:531.3px" width="136.9000000000001" height="24" viewBox="0 0 136.9000000000001 24"><polygon points="0.3,12 4.8,0.3 132.1,0.3 136.6,12 132.1,23.7 4.8,23.7" fill="#c1d0c1" stroke="#c1d0c1" stroke-width="0.6" stroke-linejoin="round"/></svg>
<div class="t" style="left:850.8px;top:533.57px;font-size:12.5px;line-height:20px;color:#333;font-weight:bold;letter-spacing:-0.505px;"><div style="width:136.9px;text-align:center">Closed</div></div>
<svg class="b" style="left:1000.5px;top:531.3px" width="154.79999999999995" height="24" viewBox="0 0 154.79999999999995 24"><polygon points="0.3,12 4.8,0.3 150.0,0.3 154.5,12 150.0,23.7 4.8,23.7" fill="#c1d0c1" stroke="#c1d0c1" stroke-width="0.6" stroke-linejoin="round"/></svg>
<div class="t" style="left:1000.5px;top:533.57px;font-size:12.5px;line-height:20px;color:#333;font-weight:bold;letter-spacing:-0.8px;"><div style="width:154.8px;text-align:center">Low</div></div>
<div class="t" style="left:1320.8px;top:534.20px;font-size:13px;line-height:20px;color:#30303a;letter-spacing:0.134px;">Charlotte White</div>
<div class="b" style="left:1470px;top:522.4px;width:50px;height:41.80000000000007px;overflow:hidden">
<div class="t" style="left:0.5px;top:11.80px;font-size:13px;line-height:20px;color:#30303a;letter-spacing:0.15px;">Software</div>
</div>
<svg class="b" style="left:850.8px;top:573.7px" width="136.9000000000001" height="24" viewBox="0 0 136.9000000000001 24"><polygon points="0.3,12 4.8,0.3 132.1,0.3 136.6,12 132.1,23.7 4.8,23.7" fill="#2b33cf" stroke="#2b33cf" stroke-width="0.6" stroke-linejoin="round"/></svg>
<div class="t" style="left:850.8px;top:575.97px;font-size:12.5px;line-height:20px;color:#fff;font-weight:bold;letter-spacing:-0.463px;"><div style="width:136.9px;text-align:center">In progress</div></div>
<svg class="b" style="left:1000.5px;top:573.7px" width="154.79999999999995" height="24" viewBox="0 0 154.79999999999995 24"><polygon points="0.3,12 4.8,0.3 150.0,0.3 154.5,12 150.0,23.7 4.8,23.7" fill="#03877a" stroke="#03877a" stroke-width="0.6" stroke-linejoin="round"/></svg>
<div class="t" style="left:1000.5px;top:575.97px;font-size:12.5px;line-height:20px;color:#fff;font-weight:bold;letter-spacing:-0.45px;"><div style="width:154.8px;text-align:center">Medium</div></div>
</div>
<div class="b" style="left:1841px;top:311px;width:10px;height:587px;background:#e5e8fa"></div>
<div class="b" style="left:1843.6px;top:326px;width:5.5px;height:178px;background:#b9bcc6;border-radius:3px"></div>
<svg class="b" style="left:1843px;top:315.5px" width="7" height="4" viewBox="0 0 7 4"><polygon points="0,4 3.5,0 7,4" fill="#b9bcc6"/></svg>
<svg class="b" style="left:1843px;top:876.5px" width="7" height="4" viewBox="0 0 7 4"><polygon points="0,0 3.5,4 7,0" fill="#b9bcc6"/></svg>
<div class="b" style="left:321px;top:887px;width:1520px;height:10.5px;background:#e5e8fa"></div>
<div class="b" style="left:335.5px;top:889.2px;width:945px;height:5.8px;background:#b9bcc6;border-radius:3px"></div>
<svg class="b" style="left:324.5px;top:888.5px" width="4" height="7" viewBox="0 0 4 7"><polygon points="4,0 0,3.5 4,7" fill="#b9bcc6"/></svg>
<svg class="b" style="left:1831.5px;top:888.5px" width="4" height="7" viewBox="0 0 4 7"><polygon points="0,0 4,3.5 0,7" fill="#b9bcc6"/></svg>
<div class="b" style="left:321px;top:897.5px;width:1530px;height:1px;background:#e2e3ea"></div>
<svg class="b" style="left:337.4px;top:916.5px" width="9.5" height="8" viewBox="0 0 9.5 8"><rect x="0" y="0" width="1.6" height="8" fill="#555"/><polygon points="9.3,0 2.5,4 9.3,8" fill="#555"/></svg>
<svg class="b" style="left:370.8px;top:916.5px" width="6.5" height="8" viewBox="0 0 6.5 8"><polygon points="6.3,0 0,4 6.3,8" fill="#555"/></svg>
<div class="b" style="left:389.1px;top:905px;width:31px;height:30.5px;background:#d6d9f6"></div>
<div class="t" style="left:389.1px;top:911.20px;font-size:13px;line-height:20px;color:#2c35d0;"><div style="width:31px;text-align:center">1</div></div>
<svg class="b" style="left:432px;top:916.5px" width="6.5" height="8" viewBox="0 0 6.5 8"><polygon points="0,0 6.3,4 0,8" fill="#555"/></svg>
<svg class="b" style="left:461.4px;top:916.5px" width="9.5" height="8" viewBox="0 0 9.5 8"><polygon points="0,0 6.8,4 0,8" fill="#555"/><rect x="7.7" y="0" width="1.6" height="8" fill="#555"/></svg>
<div class="t" style="left:494.9px;top:911.20px;font-size:13px;line-height:20px;color:#333;letter-spacing:-0.258px;">Page</div>
<div class="b" style="left:532px;top:905px;width:65px;height:30.5px;background:#f7f8fc;border:1px solid #e6e8f3;border-radius:5px"></div>
<div class="t" style="left:542.4px;top:911.20px;font-size:13px;line-height:20px;color:#333;">1</div>
<div class="t" style="left:603.8px;top:911.20px;font-size:13px;line-height:20px;color:#333;letter-spacing:-0.342px;">of 1</div>
<div class="b" style="left:638.2px;top:905px;width:64.5px;height:30.5px;background:#f7f8fc;border:1px solid #e6e8f3;border-radius:5px"></div>
<div class="b" style="left:649px;top:906px;width:16px;height:28px;overflow:hidden">
<div class="t" style="left:0.5px;top:5.20px;font-size:13px;line-height:20px;color:#333;">100</div>
</div>
<div class="b" style="left:675px;top:906px;width:26.7px;height:28.5px;background:#e6eafb;border-radius:0 4px 4px 0"></div>
<svg class="b" style="left:684.5px;top:916.5px" width="8" height="6" viewBox="0 0 8 6"><polygon points="0,0 8,0 4,6" fill="#2c35d0"/></svg>
<div class="t" style="left:709.6px;top:911.20px;font-size:13px;line-height:20px;color:#333;letter-spacing:0.062px;">items per page</div>
<div class="t" style="left:1705.8px;top:910.90px;font-size:13px;line-height:20px;color:#333;letter-spacing:-0.176px;">1 - 38 of 38 items</div>
<svg class="b" style="left:1823.5px;top:912px" width="16" height="16" viewBox="0 0 16 16"><path d="M12.6,5.2 A6,6 0 1 0 13.8,9.2" fill="none" stroke="#222" stroke-width="2"/><polygon points="9.3,0.8 14.8,0.8 14.8,6.3" fill="#222"/></svg>
<div class="b" style="left:823.3px;top:486.1px;width:179.3px;height:23px;background:#474747"></div>
<div class="t" style="left:830.2px;top:487.73px;font-size:12px;line-height:20px;color:#ffffff;letter-spacing:-0.081px;">Get me the access to the office.</div>
<div class="b" style="left:0px;top:944.5px;width:536px;height:21.5px;background:#202124;border-radius:0 4px 0 0"></div>
<div class="t" style="left:5px;top:945.53px;font-size:12px;line-height:20px;color:#ffffff;letter-spacing:0.052px;">https://en-oxari.infonet-projekt.com/Persons/Details?id=13c9b57d-7317-4b37-8cdb-0443f8740728</div>
</div></body></html>
